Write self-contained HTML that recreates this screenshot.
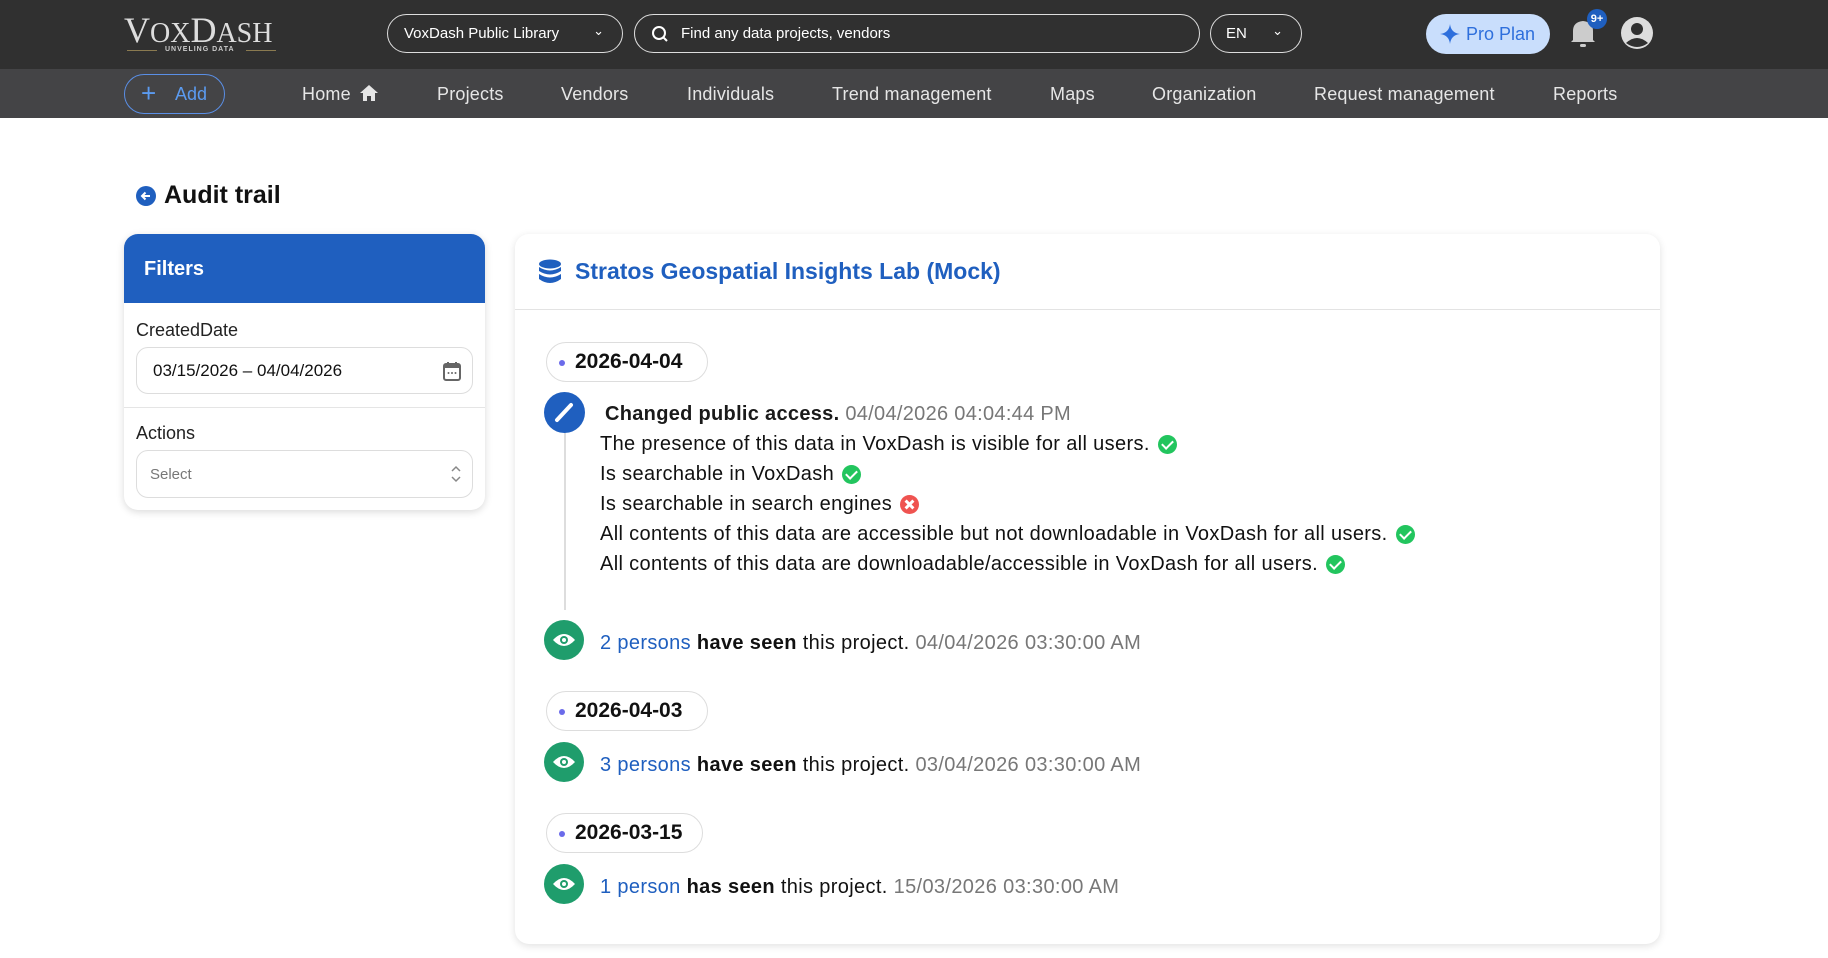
<!DOCTYPE html>
<html><head><meta charset="utf-8"><style>
*{box-sizing:border-box;margin:0;padding:0}
body{width:1828px;height:958px;background:#fff;font-family:"Liberation Sans",Arial,sans-serif;position:relative;overflow:hidden;color:#1a1a1a}
.a{position:absolute}
.top{left:0;top:0;width:1828px;height:69px;background:#303030}
.nav{left:0;top:69px;width:1828px;height:49px;background:#444446}
.nl{top:84px;font-size:18px;color:#e6e6e6;letter-spacing:0.2px}
.pill{border:1.5px solid #ddd;border-radius:20px;height:40px;width:162px;font-size:21px;font-weight:bold;display:flex;align-items:center;padding-left:28px;color:#111}
.pill:before{content:"";position:absolute;left:12px;top:17px;width:6px;height:6px;border-radius:50%;background:#6b6bea}
.line{left:600px;font-size:20px;letter-spacing:0.35px;color:#111;white-space:nowrap;display:flex;align-items:center}
.ck{display:inline-block;width:19px;height:19px;border-radius:50%;background:#22c55e;margin-left:8px;position:relative}
.ck:after{content:"";position:absolute;left:6px;top:3px;width:5px;height:9px;border:solid #fff;border-width:0 2.5px 2.5px 0;transform:rotate(45deg)}
.x{background:#ef5350}
.x:after{left:4px;top:8px;width:11px;height:3px;border:0;background:#fff;transform:rotate(45deg)}
.x:before{content:"";position:absolute;left:4px;top:8px;width:11px;height:3px;background:#fff;transform:rotate(-45deg)}
.gray{color:#777}
.blue{color:#1f5fbf}
</style></head><body>
<div class="a top"></div>
<div class="a nav"></div>
<div class="a" style="left:124px;top:9px;font-family:'Liberation Serif',serif;font-size:36px;color:#ddd">V<span style="font-size:28px">OX</span>D<span style="font-size:28px">ASH</span></div>
<div class="a" style="left:127px;top:50px;width:30px;height:1px;background:#8a7a50"></div>
<div class="a" style="left:165px;top:46px;font-size:7px;color:#ccc;font-weight:bold;letter-spacing:1px">UNVELING DATA</div>
<div class="a" style="left:246px;top:50px;width:30px;height:1px;background:#8a7a50"></div>
<div class="a" style="left:387px;top:14px;width:236px;height:39px;border:1.5px solid #ddd;border-radius:20px;color:#fff;font-size:15px;padding:10px 0 0 16px">VoxDash Public Library<span style="position:absolute;right:18px;top:8px;font-size:13px">&#8964;</span></div>
<div class="a" style="left:634px;top:14px;width:566px;height:39px;border:1.5px solid #ddd;border-radius:20px;color:#fff;font-size:15px;padding:10px 0 0 46px">Find any data projects, vendors
<svg class="a" style="left:16px;top:10px" width="18" height="18" viewBox="0 0 18 18"><circle cx="8" cy="8" r="6" fill="none" stroke="#fff" stroke-width="2"/><path d="M12.5 12.5L16 16" stroke="#fff" stroke-width="2"/></svg></div>
<div class="a" style="left:1210px;top:14px;width:92px;height:39px;border:1.5px solid #ddd;border-radius:20px;color:#fff;font-size:15px;padding:10px 0 0 15px">EN<span style="position:absolute;right:18px;top:8px;font-size:13px">&#8964;</span></div>
<div class="a" style="left:1426px;top:14px;width:124px;height:40px;border-radius:20px;background:#c9defc;color:#2e6fdc;font-size:18px;padding:10px 0 0 40px">Pro Plan<svg class="a" style="left:14px;top:10px" width="20" height="20" viewBox="0 0 20 20"><path d="M10 0Q11 9 20 10Q11 11 10 20Q9 11 0 10Q9 9 10 0Z" fill="#2e6fdc"/></svg></div>
<svg class="a" style="left:1569px;top:16px" width="28" height="34" viewBox="0 0 28 34"><path d="M4 24V15Q4 6 14 5Q24 6 24 15V24L26 26H2Z" fill="#ccc"/><rect x="11" y="28" width="6" height="3" rx="1.5" fill="#ccc"/></svg>
<div class="a" style="left:1587px;top:9px;width:20px;height:20px;border-radius:50%;background:#1f5fbf;color:#fff;font-size:11px;font-weight:bold;text-align:center;line-height:20px">9+</div>
<svg class="a" style="left:1620px;top:16px" width="34" height="34" viewBox="0 0 34 34"><circle cx="17" cy="17" r="16" fill="#ddd"/><circle cx="17" cy="13" r="6" fill="#303030"/><path d="M6 27Q17 17 28 27Q17 35 6 27Z" fill="#303030"/></svg>
<div class="a" style="left:124px;top:74px;width:101px;height:40px;border:1.5px solid #5a8fe6;border-radius:20px;color:#5b9bf0;font-size:18px;padding:9px 0 0 50px">Add<span style="position:absolute;left:16px;top:3px;font-size:26px;font-weight:300">+</span></div>
<div class="a nl" style="left:302px">Home <svg width="18" height="16" viewBox="0 0 18 16" style="vertical-align:-1px;margin-left:4px"><path d="M9 0L18 8H15V16H11V11H7V16H3V8H0Z" fill="#e6e6e6"/></svg></div>
<div class="a nl" style="left:437px">Projects</div>
<div class="a nl" style="left:561px">Vendors</div>
<div class="a nl" style="left:687px">Individuals</div>
<div class="a nl" style="left:832px">Trend management</div>
<div class="a nl" style="left:1050px">Maps</div>
<div class="a nl" style="left:1152px">Organization</div>
<div class="a nl" style="left:1314px">Request management</div>
<div class="a nl" style="left:1553px">Reports</div>

<svg class="a" style="left:136px;top:186px" width="20" height="20" viewBox="0 0 20 20"><circle cx="10" cy="10" r="10" fill="#1f5fbf"/><path d="M14 10H6M9.5 6.5L6 10L9.5 13.5" stroke="#fff" stroke-width="2" fill="none"/></svg>
<div class="a" style="left:164px;top:181px;font-size:25px;font-weight:bold;color:#111">Audit trail</div>

<div class="a" style="left:124px;top:234px;width:361px;height:276px;border-radius:14px;box-shadow:0 2px 8px rgba(0,0,0,.15);background:#fff;overflow:hidden">
<div style="height:69px;background:#1f5fbf;color:#fff;font-size:20px;font-weight:bold;padding:24px 0 0 20px">Filters</div>
<div class="a" style="left:12px;top:86px;font-size:18px;color:#222">CreatedDate</div>
<div class="a" style="left:12px;top:113px;width:337px;height:47px;border:1px solid #ddd;border-radius:12px;font-size:17px;padding:13px 0 0 16px;color:#111">03/15/2026 – 04/04/2026
<svg class="a" style="left:306px;top:13px" width="18" height="20" viewBox="0 0 18 20"><rect x="1" y="3" width="16" height="16" rx="2" fill="none" stroke="#666" stroke-width="2"/><rect x="1" y="3" width="16" height="4" fill="#666"/><path d="M5 1V4M13 1V4" stroke="#666" stroke-width="2"/><circle cx="5.5" cy="12" r="1" fill="#666"/><circle cx="9" cy="12" r="1" fill="#666"/><circle cx="12.5" cy="12" r="1" fill="#666"/></svg></div>
<div class="a" style="left:0;top:173px;width:361px;height:1px;background:#e5e5e5"></div>
<div class="a" style="left:12px;top:189px;font-size:18px;color:#222">Actions</div>
<div class="a" style="left:12px;top:216px;width:337px;height:48px;border:1px solid #ddd;border-radius:12px;font-size:15px;padding:15px 0 0 13px;color:#777">Select<svg class="a" style="left:314px;top:14px" width="10" height="18" viewBox="0 0 10 18"><path d="M1 6L5 2L9 6M1 12L5 16L9 12" stroke="#888" stroke-width="1.5" fill="none"/></svg></div>
</div>

<div class="a" style="left:515px;top:234px;width:1145px;height:710px;border-radius:14px;box-shadow:0 2px 8px rgba(0,0,0,.12);background:#fff">
<div class="a" style="left:0;top:75px;width:1145px;height:1px;background:#e3e3e3"></div>
</div>
<svg class="a" style="left:538px;top:259px" width="24" height="26" viewBox="0 0 24 26"><ellipse cx="12" cy="5" rx="11" ry="4.5" fill="#1f5fbf"/><path d="M1 8Q12 15 23 8V12Q12 19 1 12Z" fill="#1f5fbf"/><path d="M1 15Q12 22 23 15V20Q12 28 1 20Z" fill="#1f5fbf"/></svg>
<div class="a blue" style="left:575px;top:258px;font-size:23px;font-weight:bold;color:#1f5fbf">Stratos Geospatial Insights Lab (Mock)</div>

<div class="a pill" style="left:546px;top:342px">2026-04-04</div>
<div class="a" style="left:564px;top:430px;width:2px;height:180px;background:#ddd"></div>
<div class="a" style="left:544px;top:392px;width:41px;height:41px;border-radius:50%;background:#1f5fbf"><svg width="41" height="41" viewBox="0 0 41 41"><path d="M13 28L27 13" stroke="#fff" stroke-width="4" stroke-linecap="round"/></svg></div>
<div class="a" style="left:605px;top:403px;font-size:20px;letter-spacing:0.3px;white-space:nowrap"><b>Changed public access.</b> <span class="gray">04/04/2026 04:04:44 PM</span></div>
<div class="a line" style="top:433px">The presence of this data in VoxDash is visible for all users.<span class="ck"></span></div>
<div class="a line" style="top:463px">Is searchable in VoxDash<span class="ck"></span></div>
<div class="a line" style="top:493px">Is searchable in search engines<span class="ck x"></span></div>
<div class="a line" style="top:523px">All contents of this data are accessible but not downloadable in VoxDash for all users.<span class="ck"></span></div>
<div class="a line" style="top:553px">All contents of this data are downloadable/accessible in VoxDash for all users.<span class="ck"></span></div>

<svg width="0" height="0" style="position:absolute"><defs><g id="e"><circle cx="20" cy="20" r="20" fill="#1f9d6c"/><path d="M9 20Q20 8 31 20Q20 32 9 20Z" fill="#fff"/><circle cx="20" cy="20" r="4" fill="#1f9d6c"/><circle cx="20" cy="20" r="2" fill="#fff"/></g></defs></svg>
<svg class="a" style="left:544px;top:620px" width="40" height="40"><use href="#e"/></svg>
<div class="a line" style="top:632px"><span class="blue">2 persons</span>&nbsp;<b>have seen</b>&nbsp;this project.&nbsp;<span class="gray">04/04/2026 03:30:00 AM</span></div>

<div class="a pill" style="left:546px;top:691px">2026-04-03</div>
<svg class="a" style="left:544px;top:742px" width="40" height="40"><use href="#e"/></svg>
<div class="a line" style="top:754px"><span class="blue">3 persons</span>&nbsp;<b>have seen</b>&nbsp;this project.&nbsp;<span class="gray">03/04/2026 03:30:00 AM</span></div>

<div class="a pill" style="left:546px;top:813px;width:157px">2026-03-15</div>
<svg class="a" style="left:544px;top:864px" width="40" height="40"><use href="#e"/></svg>
<div class="a line" style="top:876px"><span class="blue">1 person</span>&nbsp;<b>has seen</b>&nbsp;this project.&nbsp;<span class="gray">15/03/2026 03:30:00 AM</span></div>
</body></html>
